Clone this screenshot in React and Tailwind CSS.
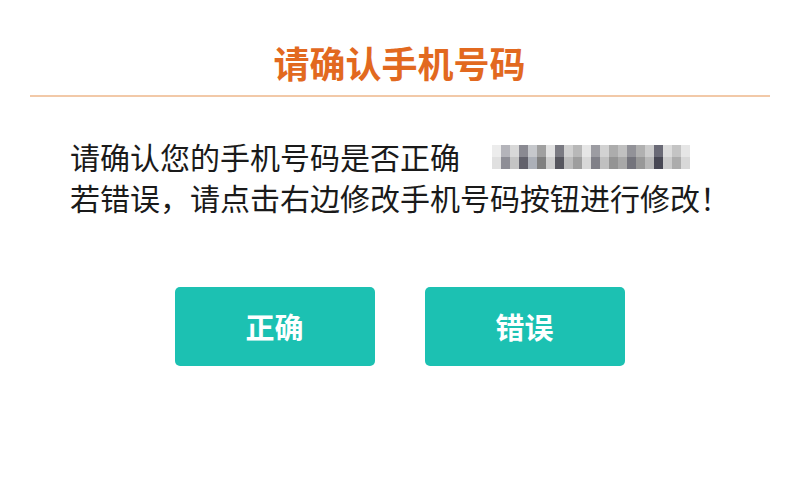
import React from "react";

// pixelated (masked) phone number, two rows of gray cells
const mosaicTop = [
  "#ececec", "#b4b4ba", "#d8d8d8", "#8a8a92", "#c6c8cc", "#a0a0a0", "#e2e2e2", "#7a7a82",
  "#d0d0d0", "#b8b8b8", "#e6e6e6", "#9c9ca2", "#d2d2d2", "#acacac", "#c0c0c0", "#929298",
  "#b0b0b0", "#cccccc", "#6a6a76", "#dcdcdc", "#c4c4c4", "#e6e6e6",
];
const mosaicBottom = [
  "#e0e0e0", "#8e8e96", "#c4c4c4", "#62626c", "#acb0b8", "#808080", "#cecece", "#56565e",
  "#bcbcbc", "#9e9e9e", "#d8d8d8", "#808088", "#c0c0c0", "#949494", "#a8a8a8", "#74747c",
  "#989898", "#b8b8b8", "#484854", "#cccccc", "#acacac", "#d8d8d8",
];

const PhoneMask = () => (
  <span className="inline-flex flex-col ml-[32px] blur-[0.6px]">
    {[mosaicTop, mosaicBottom].map((row, r) => (
      <span key={r} className="flex">
        {row.map((c, i) => (
          <span key={i} className="w-[9px] h-[12px] inline-block" style={{ backgroundColor: c }} />
        ))}
      </span>
    ))}
  </span>
);

export default function App() {
  return (
    <div
      className="w-[799px] h-[497px] bg-white flex flex-col items-center"
      style={{ fontFamily: '"Noto Sans CJK SC", "Noto Sans", sans-serif' }}
    >
      <h1 className="mt-[40px] text-[36px] leading-[44px] font-bold text-[#e2691f]">请确认手机号码</h1>
      <div className="mt-[11px] w-[740px] h-[2px] bg-[#f2c9a8]" />
      <div className="self-start pl-[70px] mt-[39px] text-[30px] leading-[41px] text-[#1a1a1a]">
        <p className="flex items-center">
          请确认您的手机号码是否正确
          <PhoneMask />
        </p>
        <p>若错误，请点击右边修改手机号码按钮进行修改！</p>
      </div>
      <div className="mt-[69px] flex gap-[50px]">
        <button className="w-[200px] h-[79px] rounded-[5px] bg-[#1cc1b2] text-white text-[29px] font-bold">
          正确
        </button>
        <button className="w-[200px] h-[79px] rounded-[5px] bg-[#1cc1b2] text-white text-[29px] font-bold">
          错误
        </button>
      </div>
    </div>
  );
}
